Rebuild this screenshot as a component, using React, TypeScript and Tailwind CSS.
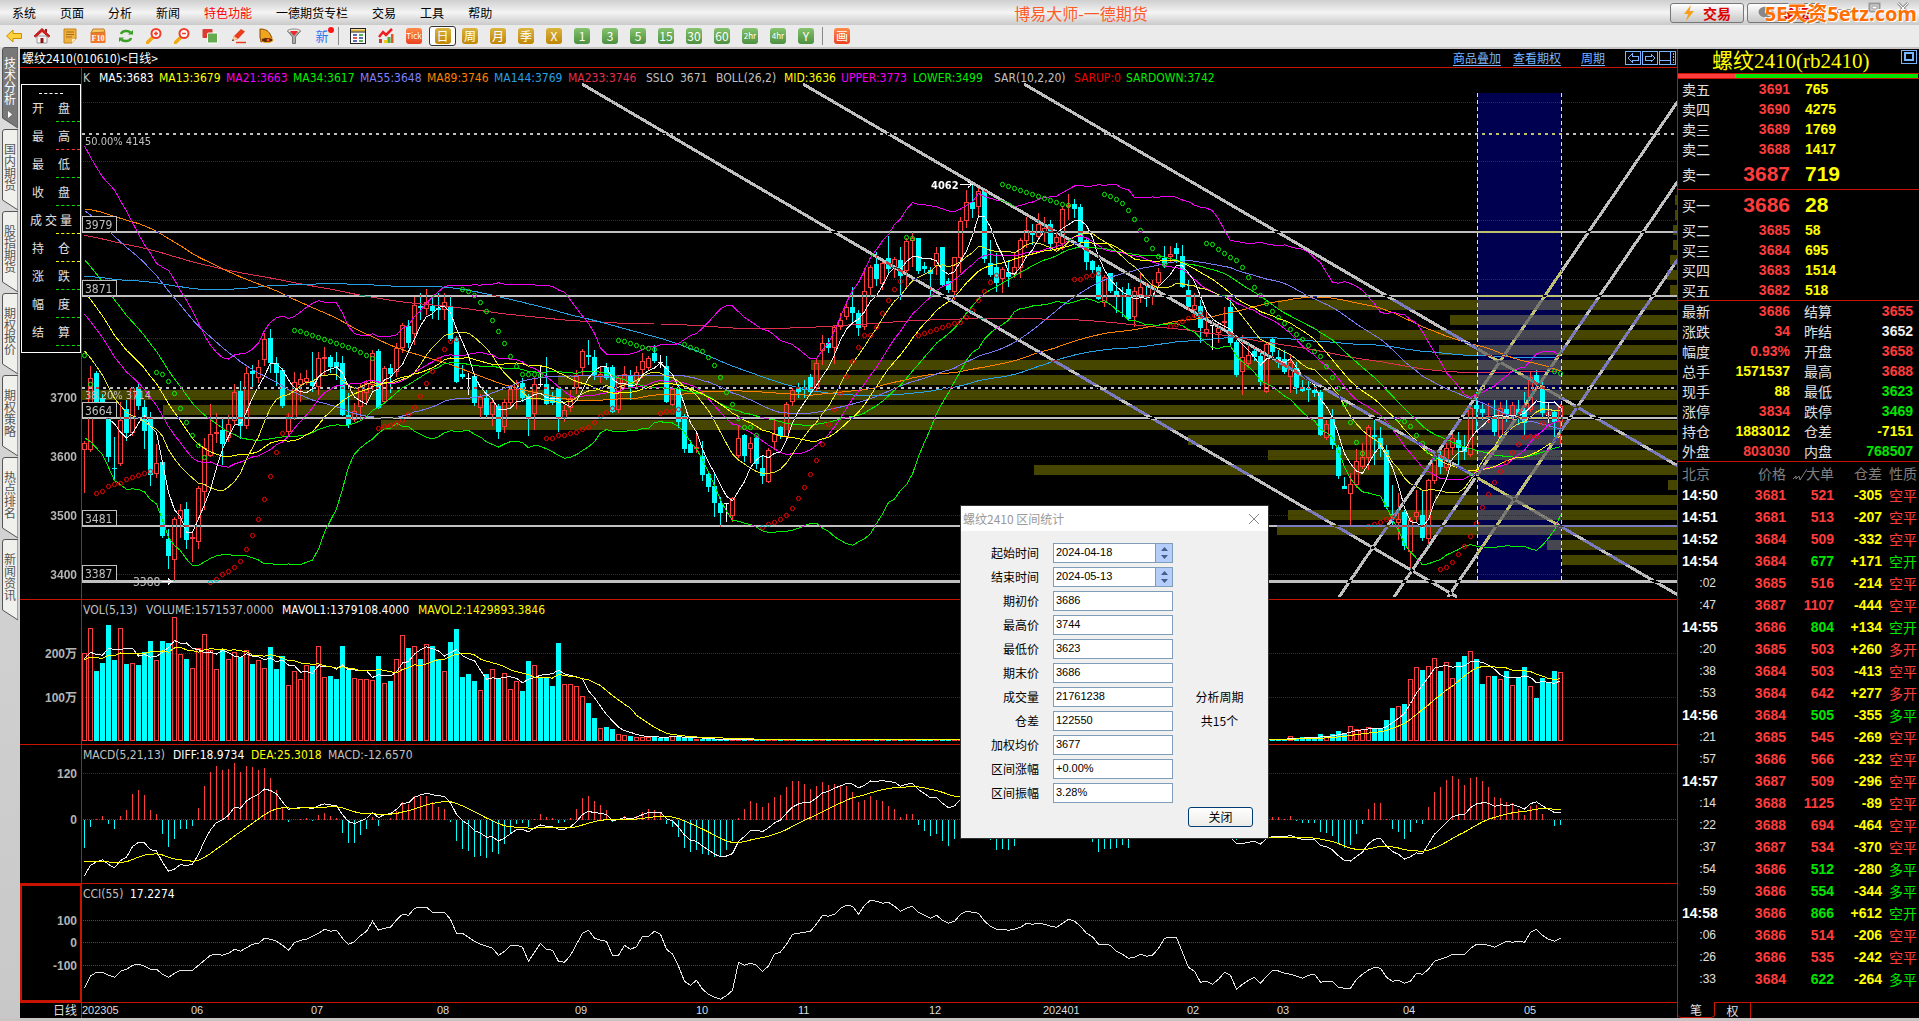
import React from "react";

/* ---------- market data (vertical plot positions, six pixels per day) ---------- */

// direction (r up, c down, w unchanged), high, body top, body bottom, low
const CANDLES = `
r441 443 450 493|r366 378 450 452|c371 373 403 410|c394 398 412 416|c416 418 457 462|c437 468 469 480|r402 420 464 466|c400 409 433 441|r387 388 433 436|c383 387 406 410
c400 407 431 449|c412 418 475 486|r444 463 474 478|c460 462 536 538|c529 539 556 569|r517 519 560 581|r504 510 519 538|c502 509 540 549|r532 537 539 562|r486 488 542 549
r438 448 492 510|r404 434 456 457|r413 432 434 443|c418 430 444 465|r415 424 438 442|r384 392 421 425|c381 391 426 439|r367 373 426 429|c365 371 374 388|r360 367 378 383
r333 339 360 366|c329 338 363 373|c357 363 373 386|c368 370 406 408|r413 418 432 435|r372 382 418 420|r373 379 385 402|r370 378 382 385|c352 382 386 392|r352 358 387 395
r347 357 358 375|c355 357 367 373|c352 362 367 380|c356 363 415 416|c393 415 425 428|r403 411 420 422|r383 387 407 420|r380 383 393 403|r350 353 385 390|c349 351 408 409
r366 368 402 404|c364 368 374 393|r343 348 372 377|r323 325 348 353|c320 326 343 348|r297 305 334 345|c293 306 308 320|r289 302 309 315|c297 306 311 319|c293 308 310 320
r293 302 310 320|c296 307 339 341|c336 338 382 383|c365 374 377 379|w373 378 379 395|c374 376 403 406|r394 397 408 418|c390 398 415 418|r398 402 415 426|c404 406 432 439
r399 402 427 433|r385 389 403 406|r380 383 390 409|c378 383 398 402|c394 396 418 436|r377 384 414 430|w366 384 385 387|c357 384 404 405|c392 397 403 405|c386 388 418 432
r405 410 418 422|r390 398 408 412|r370 375 388 394|r349 351 368 376|c340 355 357 365|c350 357 375 380|r366 374 377 383|c363 367 378 380|c365 367 412 413|r375 378 410 413
r366 374 384 388|c370 375 388 400|r366 372 382 388|r353 361 370 378|r356 358 368 371|c345 353 361 363|w355 362 363 368|c356 366 402 403|r386 389 405 406|c384 388 422 428
c414 416 449 453|c440 444 453 453|r432 447 448 453|c441 456 475 481|c472 474 487 492|c472 486 503 517|c497 503 513 527|w503 503 504 522|r497 498 516 522|r426 438 456 458
c434 435 456 462|r437 443 449 463|c437 438 464 469|c456 468 476 484|r448 450 482 483|r420 434 442 450|c426 427 436 439|r402 404 437 438|r388 390 402 406|c383 387 392 398
c380 387 390 398|c374 377 392 396|r358 363 388 392|r335 343 351 365|c338 343 348 353|r325 327 348 364|r313 320 327 330|r302 307 317 320|c287 307 313 323|c310 313 328 336
r268 291 327 330|r265 267 288 297|c252 264 279 286|r262 263 284 290|c236 258 269 273|r257 259 268 278|c247 260 276 300|r238 241 271 288|r232 238 241 267|c238 238 271 274
c262 266 269 273|c267 270 274 295|r247 253 266 275|c247 247 285 287|c278 281 290 293|r257 257 292 300|r217 221 258 273|r190 202 221 228|c185 202 209 218|r188 191 207 218
c190 191 259 263|c240 263 275 277|c253 267 283 292|r267 269 279 293|c260 272 277 287|r253 267 275 278|r238 240 268 278|r217 230 241 248|c224 232 235 245|r213 224 237 238
r217 228 233 242|c220 224 244 250|r232 237 243 250|r206 209 244 250|r194 205 207 220|c199 204 209 218|c204 207 242 244|c238 240 262 270|c260 261 270 273|c265 267 299 300
r275 277 303 307|c273 273 291 293|c282 291 295 313|c287 295 297 317|c283 289 319 321|r287 291 317 327|r273 287 295 303|c283 295 297 307|r280 285 297 305|r268 272 283 287
c246 258 263 268|r246 254 257 263|c243 248 254 263|c245 256 287 288|c280 290 307 311|r293 305 310 318|c300 306 328 343|r312 329 334 337|w320 325 326 350|r323 328 333 343
r307 321 323 328|c300 307 343 345|c340 342 375 377|r335 357 372 395|r343 355 364 368|c347 351 357 361|c350 356 382 386|r342 344 392 393|c338 339 352 357|c350 357 363 368
c350 359 372 374|r355 362 377 393|c362 368 388 394|c380 387 391 392|c380 388 390 402|c386 390 393 397|c390 392 435 436|r420 424 438 440|c409 418 445 449|c445 447 476 479
c477 486 489 489|r473 484 494 525|r449 461 485 488|r443 457 467 469|r425 427 458 470|c420 435 437 465|c427 438 449 457|c445 450 507 509|c485 514 517 526|r493 519 523 540
c510 512 546 550|r517 520 552 570|r490 512 517 522|c491 515 538 541|r479 480 539 546|r456 460 481 484|c450 457 467 474|r443 448 468 471|r434 438 448 455|c432 440 448 465
c435 447 452 460|r406 408 455 457|c392 405 409 430|c402 409 413 420|r403 416 418 423|c400 416 432 436|r402 408 437 440|c400 409 414 422|r402 405 416 420|c400 409 416 425
c392 410 423 435|r371 377 410 412|c370 375 383 390|c382 387 413 418|w402 415 416 423|c410 412 422 437|r404 406 422 444`
  .trim()
  .split(/[|\n]/)
  .map((s) => {
    const [hi, top, bot, lo] = s.slice(1).split(" ").map(Number);
    return { dir: s[0], hi, top, bot, lo, close: s[0] === "c" ? bot : top };
  });

const VOLUME = [
  850, 775, 903, 880, 765, 870, 775, 882, 880, 885, 847, 813, 871, 813, 820, 742, 853, 867, 895, 835, 793, 840, 898, 840,
  868, 845, 860, 841, 882, 871, 895, 831, 897, 858, 946, 904, 928, 886, 888, 829, 922, 918, 928, 828, 900, 925, 928, 928,
  931, 858, 940, 933, 868, 796, 835, 829, 867, 823, 828, 868, 904, 816, 777, 921, 913, 933, 961, 912, 898, 925, 910, 958,
  934, 963, 873, 886, 922, 925, 949, 820, 943, 943, 949, 979, 1000, 1044, 1073, 1071, 1077, 1093, 1096, 1098, 1102, 1100,
  1100, 1101, 1104, 1101, 1098, 1100, 1103, 1105, 1106,
];
const VOLUME_END = [
  1108, 1099, 1105, 1102, 1102, 1104, 1092, 1098, 1092, 1083, 1090, 1068, 1077, 1078, 1071, 1077, 1077, 1050, 1014, 1008,
  1002, 928, 891, 900, 888, 865, 903, 877, 925, 876, 858, 843, 867, 942, 918, 918, 928, 903, 946, 922, 891, 948, 985, 925,
  940, 903, 907,
];
const volTop = CANDLES.map((_, i) => {
  const v = i < VOLUME.length ? VOLUME[i] : i >= 200 ? VOLUME_END[i - 200] : 1108;
  return 370 + (v ?? 1108) / 3;
});

const CCI: [number, number[]][] = [
  [0, [805, 768, 757, 757, 766, 772, 754, 748, 736, 733, 739, 748, 748, 763, 772, 760, 751, 751, 751, 736]],
  [20, [721, 706, 703, 706, 700, 688, 694, 683, 673, 670, 655, 658, 664, 676, 691, 668, 661, 658, 649, 640]],
  [40, [628, 634, 631, 655, 673, 665, 647, 634, 604, 631, 625, 622, 600, 583, 586, 565, 562, 562, 577, 577]],
  [60, [577, 598, 640, 640, 652, 664, 673, 679, 685, 706, 694, 676, 676, 682, 724, 697, 670, 688, 691, 724]],
  [80, [727, 706, 673, 640, 631, 655, 661, 664, 706, 706, 676, 688, 680, 649, 649, 634, 643, 688, 702, 739]],
  [100, [784, 796, 781, 808, 823, 832, 838, 827, 811, 727, 736, 730, 736, 754, 738, 703, 696, 673, 643, 640]],
  [120, [637, 634, 612, 586, 589, 583, 565, 556, 559, 583, 556, 541, 544, 550, 547, 559, 574, 565, 559, 577]],
  [140, [586, 595, 586, 601, 610, 604, 583, 574, 577, 580, 604, 619, 628, 628, 631, 628, 622, 610, 613, 610]],
  [160, [613, 619, 622, 610, 598, 604, 619, 640, 650, 673, 673, 676, 694, 703, 715, 712, 703, 709, 706, 685]],
  [180, [655, 652, 652, 697, 742, 754, 787, 784, 793, 778, 757, 766, 808, 793, 781, 772, 790, 769, 751, 753]],
  [200, [760, 763, 769, 775, 766, 763, 787, 784, 784, 802, 805, 805, 778, 763, 750, 742, 745, 772, 784, 781]],
  [220, [790, 784, 760, 763, 748, 724, 718, 712, 703, 703, 703, 685, 673, 673, 676, 682, 673, 664, 667, 664]],
  [240, [667, 637, 628, 646, 658, 664, 655]],
];

const SAR: [string, number, number[]][] = [
  ["g", 0, [355, 384]],
  ["r", 2, [493, 491, 486, 484, 483, 479, 477, 475, 473, 471]],
  ["g", 12, [372, 374, 381, 393, 408, 422, 435, 445, 457]],
  ["r", 21, [582, 579, 574, 571, 567, 561, 549, 535, 519, 499, 476, 452, 433, 416]],
  ["g", 35, [330, 331, 333, 335, 337, 339, 341, 343, 345, 347, 349, 352, 355, 358]],
  ["r", 49, [428, 426, 425, 423, 420, 414, 407, 396, 383, 371, 359, 349, 341, 339]],
  ["g", 63, [289, 291, 295, 302, 311, 320, 331, 343, 356, 366, 374, 374, 374, 375]],
  ["r", 77, [438, 438, 435, 435, 433, 432, 429, 427, 422, 416, 412, 408]],
  ["g", 89, [340, 341, 343, 345, 347, 348, 349]],
  ["r", 96, [413, 411, 411, 409]],
  ["g", 100, [344, 347, 349, 351, 357, 365, 377, 392, 404, 418, 427, 427, 435]],
  ["r", 113, [527, 524, 522, 519, 515, 508, 498, 487, 474, 460, 444, 424, 409, 393, 376, 361, 347, 335, 335, 327, 313, 300, 289, 281]],
  ["g", 137, [237, 238]],
  ["r", 139, [335, 333, 331, 329, 327, 325, 323, 322, 317, 310, 300, 291, 282, 275]],
  ["g", 153, [184, 186, 188, 190, 192, 194, 196, 198, 200, 202, 204, 205]],
  ["r", 165, [279, 279, 276, 275, 273]],
  ["g", 170, [194, 196, 199, 203, 210, 219, 230, 239, 248, 256, 264]],
  ["r", 181, [326, 324, 321, 318, 315, 313]],
  ["g", 187, [243, 244, 249, 253, 257, 260, 267, 277, 287, 295, 303, 311, 317, 323, 329, 334, 339, 345, 351, 356, 366, 377, 388, 404, 422, 442, 453]],
  ["r", 214, [526, 524, 522, 519, 517]],
  ["g", 219, [419, 421, 426, 435, 443, 451, 458]],
  ["r", 226, [569, 567, 562, 554, 546, 536, 523, 507, 494, 482, 471, 462, 452, 444, 437, 436, 436, 423, 413]],
  ["g", 245, [371, 373]],
];

// price profile: left edge of each band, fifteen pixels apart from y = 195
const PROFILE = [
  1675, 1675, 1673, 1673, 1670, 1667, 1670, 1278, 1450, 1320, 1439, 811, 558, 82, 163, 381, 1188, 1268, 1034, 1668, 1435,
  1288, 1277, 1547, 1562,
];

/* ---------- indicators ---------- */

const PAST: [number, number][] = [
  [-1, 430], [-5, 350], [-9, 306], [-17, 253], [-27, 161], [-44, 118], [-72, 190], [-88, 300], [-116, 460], [-143, 320],
  [-188, 120], [-240, 120],
];
function past(i: number) {
  for (let k = 1; k < PAST.length; k++) {
    const [x0, y0] = PAST[k - 1];
    const [x1, y1] = PAST[k];
    if (i >= x1) return y0 + ((y1 - y0) * (i - x0)) / (x1 - x0);
  }
  return 120;
}
const closeAt = (i: number) => (i < 0 ? past(i) : CANDLES[i].close);
const xAt = (i: number) => 84.5 + 6 * i;

function average(at: (i: number) => number, n: number) {
  return CANDLES.map((_, i) => {
    let s = 0;
    for (let k = 0; k < n; k++) s += at(i - k);
    return s / n;
  });
}
const mid = average(closeAt, 26);
const dev = CANDLES.map((_, i) => {
  let s = 0;
  for (let k = 0; k < 26; k++) s += (closeAt(i - k) - mid[i]) ** 2;
  return 2 * Math.sqrt(s / 26);
});
const volAt = (i: number) => (i < 0 ? 660 : volTop[i]);

const macd = (() => {
  let fast = past(-60);
  let slow = fast;
  let dea = 0;
  const out: { diff: number; dea: number; bar: number }[] = [];
  for (let i = -60; i < CANDLES.length; i++) {
    const c = closeAt(i);
    fast += (c - fast) / 3;
    slow += (c - slow) / 11;
    const diff = ((slow - fast) / 0.59) * 0.386;
    dea += (diff - dea) / 7;
    if (i >= 0) out.push({ diff, dea, bar: 2 * (diff - dea) });
  }
  return out;
})();

const toPoints = (ys: number[], from = 0) => ys.map((y, i) => `${xAt(i + from)},${y.toFixed(1)}`).join(" ");

const RED = "#ff3c3c";
const CYAN = "#00ffff";
const GRAY = "#c0c0c0";
const tahoma = "font-['DejaVu_Sans_Condensed','DejaVu_Sans',sans-serif]";
const arial = "font-['Liberation_Sans',sans-serif]";

function Curve({ ys, color }: { ys: number[]; color: string }) {
  return <polyline points={toPoints(ys)} fill="none" stroke={color} />;
}
function Grid({ y, color = "#a00000" }: { y: number; color?: string }) {
  return <line x1="83" x2="1678" y1={y} y2={y} stroke={color} strokeDasharray="1 1" />;
}
function AxisText({ y, children }: { y: number; children: React.ReactNode }) {
  return (
    <text x="77" y={y + 5} textAnchor="end" fill="#b4b4b4" fontSize="12" fontWeight="700" className="font-['Liberation_Sans','Noto_Sans_CJK_SC',sans-serif]">
      {children}
    </text>
  );
}

type Label = [string, string, string];
function Legend({ items }: { items: Label[] }) {
  return (
    <div className={`absolute left-[63px] top-px flex whitespace-nowrap text-xs leading-[18px] ${tahoma}`}>
      {items.map(([t, c, w]) => (
        <span key={t} className={`${c} ${w}`}>{t}</span>
      ))}
    </div>
  );
}

const MAIN_LEGEND: Label[] = [
  ["K", "text-[#c0c0c0]", "w-4"],
  ["MA5:3683", "text-white", "w-[60px]"],
  ["MA13:3679", "text-[#ffff00]", "w-[67px]"],
  ["MA21:3663", "text-[#f000f0]", "w-[67px]"],
  ["MA34:3617", "text-[#00f000]", "w-[67px]"],
  ["MA55:3648", "text-[#8080ff]", "w-[67px]"],
  ["MA89:3746", "text-[#ff8000]", "w-[67px]"],
  ["MA144:3769", "text-[#28a0e6]", "w-[74px]"],
  ["MA233:3746", "text-[#e03050]", "w-[78px]"],
  ["SSLO", "text-[#c0c0c0]", "w-[34px]"],
  ["3671", "text-[#c0c0c0]", "w-9"],
  ["BOLL(26,2)", "text-[#c0c0c0]", "w-[68px]"],
  ["MID:3636", "text-[#ffff00]", "w-[57px]"],
  ["UPPER:3773", "text-[#f000f0]", "w-[72px]"],
  ["LOWER:3499", "text-[#00f000]", "w-[81px]"],
  ["SAR(10,2,20)", "text-[#c0c0c0]", "w-20"],
  ["SARUP:0", "text-[#f00000]", "w-[52px]"],
  ["SARDOWN:3742", "text-[#00f000]", ""],
];

const QUOTE_ROWS: [string, string][] = [
  ["开 盘", "border-[#00e600]"],
  ["最 高", "border-[#ff3232]"],
  ["最 低", "border-[#00e600]"],
  ["收 盘", "border-[#00e600]"],
  ["成 交 量", "border-[#ffff00]"],
  ["持 仓", "border-[#ffff00]"],
  ["涨 跌", "border-[#00e600]"],
  ["幅 度", "border-[#00e600]"],
  ["结 算", "border-[#00e600]"],
];

const LEVELS: [number, string, number][] = [
  [232, "3979", 2],
  [296, "3871", 2],
  [418, "3664", 2],
  [526, "3481", 2],
  [581, "3387", 3],
];

function MainPane() {
  return (
    <section className="relative min-h-0 border-b border-[#c81400]" aria-label="K线图">
      <svg viewBox="20 68 1657 531" preserveAspectRatio="none" className="isolate block h-full w-full" shapeRendering="crispEdges">
        <rect x="20" y="68" width="1658" height="531" fill="#000" />
        <rect x="1477" y="93" width="84" height="488" fill="#000050" />
        <g fill="#464600" className="mix-blend-screen">
          {PROFILE.map((x, i) => (
            <rect key={i} x={x} y={195 + i * 15} width={1678 - x} height="10" />
          ))}
        </g>
        {[102.5, 161.5, 220.5, 279.5, 338.5, 397.5, 456.5, 515.5, 574.5].map((y) => (
          <Grid key={y} y={y} />
        ))}
        {CANDLES.map((c, i) => {
          const x = xAt(i);
          if (c.dir === "w")
            return <path key={i} d={`M${x} ${c.hi}V${c.lo}M${x - 2.5} ${c.top + 0.5}h5`} stroke="#fff" />;
          if (c.dir === "c")
            return (
              <g key={i} fill={CYAN}>
                <rect x={x - 0.5} y={c.hi} width="1" height={c.lo - c.hi} />
                <rect x={x - 2.5} y={c.top} width="5" height={Math.max(1, c.bot - c.top)} />
              </g>
            );
          return (
            <path
              key={i}
              d={`M${x} ${c.hi}V${c.top}M${x} ${c.bot}V${c.lo}M${x - 2} ${c.top + 0.5}h4v${Math.max(1, c.bot - c.top - 1)}h-4z`}
              fill="none"
              stroke={RED}
            />
          );
        })}
        <Curve ys={average(closeAt, 233)} color="#e03050" />
        <Curve ys={average(closeAt, 144)} color="#28a0e6" />
        <Curve ys={average(closeAt, 89)} color="#ff8000" />
        <Curve ys={average(closeAt, 55)} color="#7878f0" />
        <Curve ys={average(closeAt, 34)} color="#00f000" />
        <Curve ys={average(closeAt, 21)} color="#f000f0" />
        <Curve ys={average(closeAt, 13)} color="#e6e628" />
        <Curve ys={mid} color="#ffff00" />
        <Curve ys={mid.map((m, i) => m - dev[i])} color="#f000f0" />
        <Curve ys={mid.map((m, i) => m + dev[i])} color="#00f000" />
        <Curve ys={average(closeAt, 5)} color="#f0f0f0" />
        <g fill="none" shapeRendering="auto">
          {SAR.flatMap(([c, from, ys]) =>
            ys.map((y, k) => (
              <ellipse key={`${from}-${k}`} cx={xAt(from + k)} cy={y + 0.5} rx="2" ry="2.2" stroke={c === "g" ? "#00ff00" : "#ff0000"} />
            )),
          )}
        </g>
        <path d="M1477 93V581M1561 93V581" stroke="#ffff00" strokeDasharray="4 3" />
        <g stroke={GRAY} fill="none">
          {LEVELS.map(([y, , w]) => (
            <line key={y} x1="82" x2="1678" y1={y} y2={y} strokeWidth={w} className="mix-blend-difference" />
          ))}
          {[134, 388].map((y) => (
            <line key={y} x1="82" x2="1678" y1={y} y2={y} strokeWidth="2" strokeDasharray="3 4" className="mix-blend-difference" />
          ))}
          {["M582 84L1457 597", "M803 84L1678 595", "M1024 84L1678 466", "M1339 597L1678 101", "M1394 597L1678 181", "M1448 597L1678 259"].map((d) => (
            <path key={d} d={d} strokeWidth="3" className="mix-blend-difference" />
          ))}
        </g>
        <g fill={GRAY} fontSize="12" className={tahoma}>
          <text x="85" y="145" fontSize="11">50.00% 4145</text>
          <text x="85" y="399" fontSize="11">38.20% 3714</text>
          {LEVELS.map(([y, t]) => (
            <g key={t}>
              <rect x="82.5" y={y - 15.5} width="34" height="15" fill="#000" stroke={GRAY} />
              <text x="85" y={y - 3}>{t}</text>
            </g>
          ))}
          <text x="931" y="189" fill="#fff" fontWeight="700" fontSize="11">4062</text>
          <path d="M960 184.5h12m-4 -3l4 3l-4 3" stroke="#fff" fill="none" />
          <text x="133" y="586">3388</text>
          <path d="M162 581.5h10m-4 -3l4 3l-4 3" stroke="#fff" fill="none" />
        </g>
        {[3700, 3600, 3500, 3400].map((p, i) => (
          <AxisText key={p} y={397 + i * 59}>{p}</AxisText>
        ))}
        <line x1="81.5" x2="81.5" y1="68" y2="599" stroke="#c81400" />
      </svg>
      <Legend items={MAIN_LEGEND} />
      <div className="absolute left-px top-4 w-[60px] border border-white bg-black pb-1.5 text-xs text-[#e0e0e0]">
        <div className="flex h-[9px] items-end justify-center"><span className="w-6 border-t border-dashed border-white" /></div>
        {QUOTE_ROWS.map(([t, c]) => (
          <div key={t} className="flex h-7 flex-col justify-end">
            <span className={`flex justify-between leading-4 ${t.length > 3 ? "px-2" : "px-[10px]"}`}>
              {t.split(" ").map((w) => (
                <span key={w}>{w}</span>
              ))}
            </span>
            <span className={`ml-auto mt-[5px] w-6 border-t border-dashed ${c}`} />
          </div>
        ))}
      </div>
    </section>
  );
}

function VolumePane() {
  return (
    <section className="relative min-h-0 border-b border-[#c81400]" aria-label="成交量">
      <svg viewBox="20 600 1657 144" preserveAspectRatio="none" className="block h-full w-full" shapeRendering="crispEdges">
        <Grid y={653.5} />
        <Grid y={697.5} />
        {volTop.map((t, i) => {
          const y = Math.round(t);
          return CANDLES[i].dir === "r" ? (
            <rect key={i} x={xAt(i) - 2} y={y + 0.5} width="4" height={Math.max(1, 740 - y)} fill="none" stroke={RED} />
          ) : (
            <rect key={i} x={xAt(i) - 2.5} y={y} width="5" height={741 - y} fill={CYAN} />
          );
        })}
        <Curve ys={average(volAt, 5)} color="#f0f0f0" />
        <Curve ys={average(volAt, 13)} color="#ffff00" />
        <AxisText y={653}>200万</AxisText>
        <AxisText y={697}>100万</AxisText>
        <line x1="81.5" x2="81.5" y1="600" y2="744" stroke="#c81400" />
      </svg>
      <Legend
        items={[
          ["VOL(5,13)", "text-[#c0c0c0]", "w-[63px]"],
          ["VOLUME:1571537.0000", "text-[#c0c0c0]", "w-[136px]"],
          ["MAVOL1:1379108.4000", "text-white", "w-[136px]"],
          ["MAVOL2:1429893.3846", "text-[#ffff00]", ""],
        ]}
      />
    </section>
  );
}

function MacdPane() {
  return (
    <section className="relative min-h-0 border-b border-[#c81400]" aria-label="MACD">
      <svg viewBox="20 745 1657 138" preserveAspectRatio="none" className="block h-full w-full" shapeRendering="crispEdges">
        <Grid y={773.5} />
        <Grid y={819.5} color="#c81400" />
        {macd.map((m, i) => (
          <line key={i} x1={xAt(i)} x2={xAt(i)} y1="819.5" y2={819.5 - Math.max(-50, Math.min(57, m.bar))} stroke={m.bar > 0 ? RED : CYAN} />
        ))}
        <Curve ys={macd.map((m) => Math.min(881, 819.5 - m.diff))} color="#f0f0f0" />
        <Curve ys={macd.map((m) => 819.5 - m.dea)} color="#ffff00" />
        <AxisText y={773}>120</AxisText>
        <AxisText y={819}>0</AxisText>
        <line x1="81.5" x2="81.5" y1="745" y2="883" stroke="#c81400" />
      </svg>
      <Legend
        items={[
          ["MACD(5,21,13)", "text-[#c0c0c0]", "w-[90px]"],
          ["DIFF:18.9734", "text-white", "w-[78px]"],
          ["DEA:25.3018", "text-[#ffff00]", "w-[77px]"],
          ["MACD:-12.6570", "text-[#c0c0c0]", ""],
        ]}
      />
    </section>
  );
}

function CciPane() {
  return (
    <section className="relative min-h-0 border-b border-[#c81400]" aria-label="CCI">
      <svg viewBox="20 884 1657 118" preserveAspectRatio="none" className="block h-full w-full" shapeRendering="crispEdges">
        <Grid y={920.5} color="#d01400" />
        <Grid y={942.5} color="#d01400" />
        <Grid y={965.5} color="#d01400" />
        <polyline points={CCI.map(([from, ys]) => toPoints(ys.map((p) => 720 + p / 3), from)).join(" ")} fill="none" stroke="#e6e6e6" />
        <AxisText y={920}>100</AxisText>
        <AxisText y={942}>0</AxisText>
        <AxisText y={965}>-100</AxisText>
        <path d="M20.5 884.5H81V1001H20.5z" fill="none" stroke="#c81400" strokeWidth="2" />
      </svg>
      <Legend items={[["CCI(55)", "text-[#c0c0c0]", "w-[47px]"], ["17.2274", "text-white", ""]]} />
    </section>
  );
}

const MONTHS: [number, string][] = [
  [82, "202305"], [191, "06"], [311, "07"], [437, "08"], [575, "09"], [696, "10"], [798, "11"], [929, "12"],
  [1043, "202401"], [1187, "02"], [1277, "03"], [1403, "04"], [1524, "05"],
];

function TimeAxis() {
  return (
    <svg viewBox="20 1003 1657 15" preserveAspectRatio="none" className="block h-full w-full">
      <g fill="#dcdcdc" fontSize="11" className="font-['Liberation_Sans','Noto_Sans_CJK_SC',sans-serif]">
        <text x="53" y="1015" fontSize="12">日线</text>
        {MONTHS.map(([x, t]) => (
          <text key={x} x={x} y="1014">{t}</text>
        ))}
      </g>
      <line x1="81.5" x2="81.5" y1="1003" y2="1018" stroke="#c81400" shapeRendering="crispEdges" />
    </svg>
  );
}

function StatDialog() {
  const rows: [string, string][] = [
    ["起始时间", "2024-04-18"], ["结束时间", "2024-05-13"], ["期初价", "3686"], ["最高价", "3744"], ["最低价", "3623"],
    ["期末价", "3686"], ["成交量", "21761238"], ["仓差", "122550"], ["加权均价", "3677"], ["区间涨幅", "+0.00%"], ["区间振幅", "3.28%"],
  ];
  return (
    <div role="dialog" aria-label="区间统计" className="absolute left-[960px] top-[505px] w-[309px] border border-[#303030] bg-[#f0f0f0] text-xs text-black">
      <div className="flex h-[25px] items-center justify-between bg-white pl-0.5 pr-2 text-[#999]">
        <span>螺纹2410 区间统计</span>
        <button aria-label="关闭窗口">
          <svg width="12" height="12" viewBox="0 0 12 12" stroke="#888" fill="none"><path d="M1 1l10 10M11 1L1 11" /></svg>
        </button>
      </div>
      <div className="pb-[11px] pt-3">
        {rows.map(([label, value], i) => (
          <div key={label} className="mb-1 flex h-5 items-center">
            <label htmlFor={`stat-${i}`} className="w-[78px] text-right">{label}</label>
            <div className="ml-3.5 flex h-5 w-[120px] border border-[#7f9db9] bg-white">
              <input id={`stat-${i}`} defaultValue={value} className={`min-w-0 flex-1 pb-0.5 pl-0.5 text-[11px] leading-4 outline-none ${arial}`} />
              {i < 2 && (
                <span className="flex w-[17px] flex-col items-center justify-center gap-1 border-l border-[#7f9db9] bg-[#b4cdfa]">
                  <button aria-label="增加"><svg className="block" width="7" height="4" viewBox="0 0 7 4"><path d="M0 4L3.500 0L7 4z" fill="#405f90" /></svg></button>
                  <button aria-label="减少"><svg className="block" width="7" height="4" viewBox="0 0 7 4"><path d="M0 0L3.500 4L7 0z" fill="#405f90" /></svg></button>
                </span>
              )}
            </div>
            {i === 6 && <span className="flex-1 pr-0.5 text-center">分析周期</span>}
            {i === 7 && <span className="flex-1 pr-0.5 text-center">共15个</span>}
          </div>
        ))}
        <div className="flex justify-end pr-[15px]">
          <button className="h-5 w-[65px] rounded-[3px] border border-[#003c74] bg-gradient-to-b from-white to-[#ecebe6] leading-4">关闭</button>
        </div>
      </div>
    </div>
  );
}

/* ---------- window chrome ---------- */

const MENUS = ["系统", "页面", "分析", "新闻", "特色功能", "一德期货专栏", "交易", "工具", "帮助"];

function TitleBar() {
  return (
    <header className="relative flex h-[25px] shrink-0 items-center bg-gradient-to-b from-[#cfcfcf] via-[#f4f4f4] to-[#cacaca]">
      <nav className="flex gap-6 pl-3 text-xs text-black">
        {MENUS.map((m) => (
          <button key={m} className={m === "特色功能" ? "text-[#ff0000]" : ""}>{m}</button>
        ))}
      </nav>
      <h1 className="flex-1 text-center text-base leading-5 text-[#ff5a28]">博易大师-一德期货</h1>
      <div className="flex items-center gap-[3px]">
        <button className="flex h-5 w-[74px] items-center justify-center gap-2 rounded-[3px] border border-[#777] bg-gradient-to-b from-white to-[#c8c8c8] text-sm font-bold text-[#e00000]">
          <svg width="12" height="16" viewBox="0 0 12 16"><path d="M8 0L1 9h4l-2 7l8-10H6.500z" fill="#f5a01e" /></svg>
          交易
        </button>
        <button className="flex h-5 w-[74px] items-center justify-center gap-2 rounded-[3px] border border-[#777] bg-gradient-to-b from-white to-[#c8c8c8] text-sm font-bold text-[#e00000]">
          <svg width="16" height="14" viewBox="0 0 16 14"><ellipse cx="8" cy="6" rx="7.500" ry="5.500" fill="#888" /><path d="M6 10l3 4l1-4" fill="#888" /></svg>
          论坛
        </button>
      </div>
      <div className="flex w-[98px] items-start justify-between self-start pl-4 pr-2.5 pt-0.5">
        <svg width="14" height="12" viewBox="0 0 14 12"><rect x=".5" y="7.500" width="13" height="3" fill="#fff" stroke="#999" /></svg>
        <svg width="13" height="11" viewBox="0 0 13 11"><rect x="1.500" y="1.500" width="10" height="8" fill="none" stroke="#999" strokeWidth="2" /><rect x="4" y="4" width="5" height="3" fill="#fff" stroke="#999" /></svg>
        <svg width="12" height="12" viewBox="0 0 12 12"><path d="M1 1l10 10M11 1L1 11" stroke="#999" strokeWidth="3" /><path d="M1 1l10 10M11 1L1 11" stroke="#fff" /></svg>
      </div>
      <div className="absolute right-0.5 top-0.5 z-10 whitespace-nowrap font-['Open_Sans','Noto_Sans_CJK_SC',sans-serif] text-xl font-bold leading-6 text-[#ff6e00] [text-shadow:1px_1px_0_#fff,-1px_-1px_0_#fff]">
        5E天资5etz.com
      </div>
    </header>
  );
}

function Tile({ t, kind, small }: { t: string; kind: "gold" | "green" | "red"; small?: boolean }) {
  const bg =
    kind === "gold"
      ? "from-[#d9b43c] to-[#bf8600]"
      : kind === "green"
        ? "from-[#86c46e] to-[#4c9040]"
        : "from-[#ff8a4a] to-[#ea4020]";
  return (
    <span className={`flex h-4 w-4 items-center justify-center overflow-hidden rounded-[3px] bg-gradient-to-b ${bg} ${small ? "text-[8px]" : "text-xs"} leading-4 text-white`}>
      {t}
    </span>
  );
}

const Svg = ({ children }: { children: React.ReactNode }) => (
  <svg width="16" height="16" viewBox="0 0 16 16">{children}</svg>
);

const ICONS: [string, React.ReactNode][] = [
  ["后退", <Svg><path d="M.5 8L7 2v3.500h8.500v5H7V14z" fill="#ffd23c" stroke="#c89000" /></Svg>],
  ["主页", <Svg><path d="M3 8h10v7H3z" fill="#f4f4f4" stroke="#999" /><path d="M8 .5L0 8l1.500 1L8 3.500L14.500 9L16 8z" fill="#c81e1e" stroke="#c81e1e" /><path d="M11 1h2v4l-2-2z" fill="#a01414" /><path d="M6.500 10h3v5h-3z" fill="#8c1414" /></Svg>],
  ["公告", <Svg><path d="M2 1h12v10l-4 4H2z" fill="#eeb040" stroke="#c48414" /><path d="M4 4h8M4 6.500h8M4 9h6" stroke="#a86c10" /><path d="M10 15v-4h4z" fill="#fff0c8" /></Svg>],
  ["F10", <Svg><rect x=".5" y="4" width="15" height="11" rx="1" fill="#f07828" /><path d="M1 5L3 1h11l1 3z" fill="#f8c864" stroke="#c87828" /><text x="8" y="13" textAnchor="middle" fontSize="8" fontWeight="700" fill="#fff" fontFamily="Liberation Serif">F10</text></Svg>],
  ["刷新", <Svg><path d="M3 6C4 2.500 10 2 12.500 4.500" fill="none" stroke="#3ca028" strokeWidth="2.500" /><path d="M10 6.500h5V2z" fill="#3ca028" /><path d="M13 10c-1 3.500-7 4-9.500 1.500" fill="none" stroke="#3ca028" strokeWidth="2.500" /><path d="M6 9.500H1V14z" fill="#3ca028" /></Svg>],
  ["放大", <Svg><path d="M1 15l5-5" stroke="#f0aa14" strokeWidth="3.500" strokeLinecap="round" /><circle cx="10" cy="5.500" r="4.500" fill="#fff" stroke="#f03c28" strokeWidth="2" /><path d="M8 5.500h4M10 3.500v4" stroke="#f03c28" strokeWidth="1.500" /></Svg>],
  ["缩小", <Svg><path d="M1 15l5-5" stroke="#f0aa14" strokeWidth="3.500" strokeLinecap="round" /><circle cx="10" cy="5.500" r="4.500" fill="#fff" stroke="#f03c28" strokeWidth="2" /><path d="M8 5.500h4" stroke="#f03c28" strokeWidth="1.500" /></Svg>],
  ["叠加", <Svg><rect x=".5" y="1" width="10" height="9" rx="1" fill="#dc3c32" /><rect x="5.500" y="5" width="10" height="10" rx="1" fill="#64aa50" stroke="#fff" /></Svg>],
  ["画线", <Svg><path d="M2 13l2-5L11 1l4 2.500L8 11z" fill="#eb3c1e" /><path d="M2 13l2-5l4 3z" fill="#f5d2a0" /><path d="M2 13l1-2l1 1.500z" fill="#222" /><path d="M6 14.500h10" stroke="#eb3c1e" strokeWidth="1.500" /></Svg>],
  ["预警", <Svg><path d="M2 1c4 0 8 1 10 5l2 4l-11 4l-1-5z" fill="#f0a51e" stroke="#8c4600" /><ellipse cx="9" cy="12" rx="6" ry="2.500" fill="#5a2800" stroke="#f0a51e" /><circle cx="10" cy="12" r="1.500" fill="#ff5a1e" /></Svg>],
  ["过滤", <Svg><path d="M1.500 3L6.500 9v6.500h3V9L14.500 3z" fill="#aaa" stroke="#777" /><ellipse cx="8" cy="3" rx="6.500" ry="2" fill="#eee" stroke="#888" /><path d="M4 3h8L8 8z" fill="#f02828" /></Svg>],
];

const PERIODS: [string, "gold" | "green"][] = [
  ["周", "gold"], ["月", "gold"], ["季", "gold"], ["X", "gold"], ["1", "green"], ["3", "green"], ["5", "green"],
  ["15", "green"], ["30", "green"], ["60", "green"], ["2hr", "green"], ["4hr", "green"], ["Y", "green"],
];

function Toolbar() {
  return (
    <div className="flex h-6 shrink-0 items-center border-b-2 border-[#c8c4c4] bg-[#ebebeb] pl-1.5">
      <div className="flex items-center gap-3">
        {ICONS.map(([name, icon]) => (
          <button key={name} aria-label={name}>{icon}</button>
        ))}
        <button className="relative h-4 w-4 text-[13px] leading-4 text-[#2878f0]">
          新
          <span className="absolute -right-1 -top-px h-1.5 w-1.5 rounded-full bg-[#ff1414]" />
        </button>
      </div>
      <span className="ml-2 mr-[11px] h-[18px] w-px bg-[#888]" />
      <div className="flex items-center gap-3">
        <button aria-label="报价"><Svg><rect x=".5" y=".5" width="15" height="15" fill="#fff" stroke="#222" /><path d="M1 2.500h14" stroke="#e6b428" strokeWidth="2" /><path d="M1 4h14" stroke="#222" /><path d="M3 7h4M3 13h4" stroke="#223c96" strokeWidth="1.500" /><path d="M9 7h4M9 13h4" stroke="#289628" strokeWidth="1.500" /><path d="M3 10h4" stroke="#dc1e1e" strokeWidth="1.500" /><path d="M9 10h4" stroke="#223c96" strokeWidth="1.500" /></Svg></button>
        <button aria-label="走势"><Svg><path d="M1 9l4-5l3 3l6-6" fill="none" stroke="#f01e1e" strokeWidth="2.500" /><path d="M1 11h3v4H1z" fill="#d23c28" /><path d="M6 12h3v3H6z" fill="#f0c81e" /><path d="M9.500 9h3v6h-3z" fill="#50aa32" /><path d="M13 6h2.500v9H13z" fill="#dc5a28" /></Svg></button>
        <button><Tile t="Tick" kind="red" small /></button>
      </div>
      <button className="ml-[7px] flex h-5 w-[27px] items-center justify-center rounded-[3px] border border-[#333] bg-white"><Tile t="日" kind="gold" /></button>
      <div className="ml-1.5 flex items-center gap-3">
        {PERIODS.map(([t, k]) => (
          <button key={t}><Tile t={t} kind={k} small={t.length > 2} /></button>
        ))}
      </div>
      <span className="ml-2 mr-[11px] h-[18px] w-px bg-[#888]" />
      <button><Tile t="画" kind="red" /></button>
    </div>
  );
}

const TABS = ["技术分析", "国内期货", "股指期货", "期权报价", "期权策略", "热点排名", "新闻资讯"];

function SideTabs() {
  return (
    <nav className="-mt-0.5 w-5 shrink-0 bg-gradient-to-b from-[#dcdcdc] to-[#c8c8c8] pl-0.5">
      {TABS.map((t, i) => (
        <button key={t} className="relative flex h-[82px] w-4 flex-col items-center text-xs leading-3">
          <svg className="absolute inset-0" width="16" height="82" viewBox="0 0 16 82">
            <path d="M16 .5H3Q.5 .5 .5 3V71L16 81z" fill={i === 0 ? "#787878" : "#f0f0ec"} stroke="#555" />
          </svg>
          <span className={`relative flex flex-col ${i === 0 ? "pt-2.5 text-white" : "pt-3.5 text-[#555]"}`}>
            {t.split("").map((c, k) => (
              <span key={k}>{c}</span>
            ))}
          </span>
          {i === 0 && <svg className="relative mt-1.5" width="4" height="7" viewBox="0 0 4 7"><path d="M0 0L4 3.500L0 7z" fill="#fff" /></svg>}
        </button>
      ))}
    </nav>
  );
}

/* ---------- quote panel ---------- */

const R = "text-[#ff3c3c]";
const G = "text-[#00e600]";
const Y = "text-[#ffff00]";
const W = "text-[#f0f0f0]";

const DEPTH: [string, string, string][][] = [
  [["卖五", "3691", "765"], ["卖四", "3690", "4275"], ["卖三", "3689", "1769"], ["卖二", "3688", "1417"], ["卖一", "3687", "719"]],
  [["买一", "3686", "28"], ["买二", "3685", "58"], ["买三", "3684", "695"], ["买四", "3683", "1514"], ["买五", "3682", "518"]],
];
const STATS: [string, string, string, string, string, string][] = [
  ["最新", "3686", R, "结算", "3655", R],
  ["涨跌", "34", R, "昨结", "3652", W],
  ["幅度", "0.93%", R, "开盘", "3658", R],
  ["总手", "1571537", Y, "最高", "3688", R],
  ["现手", "88", Y, "最低", "3623", G],
  ["涨停", "3834", R, "跌停", "3469", G],
  ["持仓", "1883012", Y, "仓差", "-7151", Y],
  ["外盘", "803030", R, "内盘", "768507", G],
];
const TICKS = `14:50 3681 521 -305 空平|14:51 3681 513 -207 空平|14:52 3684 509 -332 空平|14:54 3684 677 +171 空开|:02 3685 516 -214 空平|:47 3687 1107 -444 空平|14:55 3686 804 +134 空开|:20 3685 503 +260 多开|:38 3684 503 -413 空平|:53 3684 642 +277 多开|14:56 3684 505 -355 多平|:21 3685 545 -269 空平|:57 3686 566 -232 空平|14:57 3687 509 -296 空平|:14 3688 1125 -89 空平|:22 3688 694 -464 空平|:37 3687 534 -370 空平|:54 3686 512 -280 多平|:59 3686 554 -344 多平|14:58 3686 866 +612 空开|:06 3686 514 -206 空平|:26 3686 535 -242 空平|:33 3684 622 -264 多平`
  .split("|")
  .map((r) => r.split(" "));

const num = "font-['Liberation_Sans',sans-serif] font-bold";

function QuotePanel() {
  return (
    <aside className="flex w-[242px] shrink-0 flex-col border-l border-[#c81400] bg-black text-sm">
      <div className="relative flex h-6 items-center pl-[34px]">
        <h2 className="font-['Liberation_Serif','Noto_Sans_CJK_SC',serif] text-[21px] leading-6 text-[#ffff00]">螺纹2410(rb2410)</h2>
        <svg className="absolute right-0.5 top-px" width="16" height="14" viewBox="0 0 16 14" fill="none" stroke="#78b4ff" shapeRendering="crispEdges"><rect x=".5" y=".5" width="15" height="13" /><rect x="4" y="3" width="8" height="7" strokeWidth="2" /></svg>
      </div>
      <div className="flex h-1.5 border-y border-[#c81400]">
        <div className="w-[57px] bg-[#ff3c3c]" />
        <div className="mr-px flex-1 bg-[#00e600]" />
      </div>
      {DEPTH.map((rows, g) => (
        <table key={g} className="w-full border-b border-[#c81400]">
          <tbody>
            {rows.map(([l, p, q]) => {
              const big = l.endsWith("一");
              return (
                <tr key={l} className={big ? "h-[30px]" : "h-5"}>
                  <th scope="row" className="w-[50px] py-0 pl-1 text-left font-normal leading-5 text-[#e0e0e0]">{l}</th>
                  <td className={`w-[62px] p-0 text-right ${num} ${R} ${big ? "text-[21px] leading-7" : "leading-5"}`}>{p}</td>
                  <td className={`py-0 pl-[15px] ${num} ${Y} ${big ? "text-[21px] leading-7" : "leading-5"}`}>{q}</td>
                </tr>
              );
            })}
          </tbody>
        </table>
      ))}
      <table className="w-full border-b border-[#c81400]">
        <tbody>
          {STATS.map(([a, b, bc, c, d, dc]) => (
            <tr key={a} className="h-5 leading-5">
              <th scope="row" className="w-[35px] py-0 pl-1 text-left font-normal text-[#e0e0e0]">{a}</th>
              <td className={`w-[77px] p-0 text-right ${num} ${bc}`}>{b}</td>
              <th scope="row" className="w-[58px] py-0 pl-3.5 text-left font-normal text-[#e0e0e0]">{c}</th>
              <td className={`py-0 pr-1.5 text-right ${num} ${dc}`}>{d}</td>
            </tr>
          ))}
        </tbody>
      </table>
      <table className="w-full table-fixed">
        <thead>
          <tr className="h-[22px] leading-[22px] text-[#808080]">
            <th className="w-[42px] p-0 pl-1 text-left font-normal">北京</th>
            <th className="w-[66px] p-0 text-right font-normal">价格</th>
            <th className="w-12 whitespace-nowrap p-0 text-right font-normal"><svg className="-mr-px inline" width="14" height="12" viewBox="0 0 14 12" fill="none" stroke="#808080"><path d="M0 10l3-3v3l3-3M6 7l1 4L14 0" /></svg>大单</th>
            <th className="w-12 p-0 text-right font-normal">仓差</th>
            <th className="p-0 pl-[7px] text-left font-normal">性质</th>
          </tr>
        </thead>
        <tbody>
          {TICKS.map(([t, p, v, d, k], i) => {
            const buy = k === "空开" || k === "多平";
            return (
              <tr key={i} className="h-[22px] leading-[22px]">
                <td className={`p-0 ${t[0] === ":" ? "pr-1 text-right text-xs text-[#e0e0e0]" : `pl-1 text-left text-white ${num}`} ${arial}`}>{t}</td>
                <td className={`p-0 text-right ${num} ${R}`}>{p}</td>
                <td className={`p-0 text-right ${num} ${buy ? G : R}`}>{v}</td>
                <td className={`p-0 text-right ${num} ${Y}`}>{d}</td>
                <td className={`whitespace-nowrap p-0 pl-[7px] text-left ${buy ? G : R}`}>{k}</td>
              </tr>
            );
          })}
        </tbody>
      </table>
      <div className="mt-auto flex h-4 text-xs leading-[15px] text-[#e0e0e0]">
        <button className="w-[37px] rounded-b-sm border-b border-r border-[#c81400]">笔</button>
        <button className="w-9 border-r border-t border-[#c81400]">权</button>
        <span className="flex-1 border-t border-[#c81400]" />
      </div>
    </aside>
  );
}

function ChartHeader() {
  const link = "text-[#78b4ff] underline underline-offset-2";
  return (
    <div className="flex h-[19px] shrink-0 items-center border-b border-[#c81400] pb-px pl-0.5 text-xs leading-4 text-white">
      <span>螺纹2410(010610)&lt;日线&gt;</span>
      <a href="#overlay" className={`ml-auto ${link}`}>商品叠加</a>
      <a href="#options" className={`ml-3 ${link}`}>查看期权</a>
      <a href="#period" className={`ml-5 ${link}`}>周期</a>
      <svg className="ml-5 mr-px" width="51" height="14" viewBox="0 0 51 14" fill="none" stroke="#78b4ff" shapeRendering="crispEdges">
        <path d="M.5 .5h15v13H.5zM17.500 .5h15v13h-15zM34.500 .5h16v13h-16zM34.500 9.500h11M45.500 .5v13" />
        <path d="M3 7l4-4v2h6v4H7v2zM30 7l-4-4v2h-6v4h6v2z" />
        <path d="M48.500 2v10" strokeDasharray="2 1" />
      </svg>
    </div>
  );
}

export default function App() {
  return (
    <div className="relative flex h-screen flex-col overflow-hidden bg-[#c8c4c4] pb-[3px] font-['Noto_Sans_CJK_SC',sans-serif]">
      <TitleBar />
      <Toolbar />
      <div className="flex min-h-0 flex-1">
        <SideTabs />
        <main className="flex min-w-0 flex-1 flex-col bg-black">
          <ChartHeader />
          <div className="grid min-h-0 flex-1 grid-rows-[532fr_145fr_139fr_119fr_15px]">
            <MainPane />
            <VolumePane />
            <MacdPane />
            <CciPane />
            <TimeAxis />
          </div>
        </main>
        <QuotePanel />
      </div>
      <StatDialog />
    </div>
  );
}
